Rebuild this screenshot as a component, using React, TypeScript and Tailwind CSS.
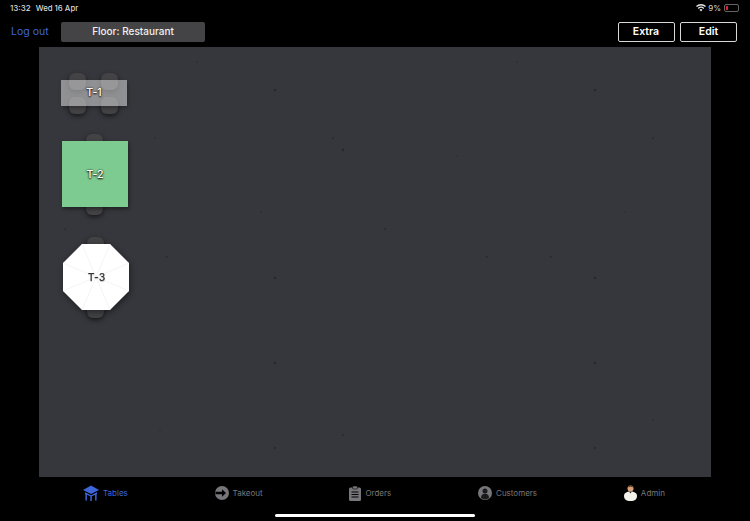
import React from "react";

const font = { fontFamily: '"Inter","Liberation Sans",sans-serif' };

function Chair({ className }: { className: string }) {
  return <div className={`absolute w-[17px] h-[17px] rounded-[6px] bg-[#434346] shadow-[0_2px_5px_rgba(0,0,0,0.6)] ${className}`} />;
}

function TabItem({ icon, label, active }: { icon: React.ReactNode; label: string; active?: boolean }) {
  return (
    <div className="flex items-center gap-[4px] h-[16px]">
      {icon}
      <span className={`text-[8px] leading-none ${active ? "text-[#3f66d8]" : "text-[#77777b]"}`}>{label}</span>
    </div>
  );
}

const specks: [number, number, number][] = [
  [275, 90, 1.3], [595, 90, 1.3], [343, 150, 1.4], [333, 138, 1], [653, 138, 1], [275, 278, 1.3], [595, 278, 1.3],
  [275, 363, 1.3], [595, 363, 1.3], [385, 229, 1], [487, 257, 1], [551, 257, 1], [261, 212, 0.8], [457, 156, 0.7],
  [275, 448, 1.2], [595, 448, 1.2], [65, 229, 0.9], [167, 257, 0.9], [197, 62, 0.8], [517, 62, 0.8],
  [343, 435, 1], [155, 138, 0.8], [653, 420, 0.8], [450, 400, 0.7], [160, 430, 0.8], [625, 212, 0.7],
];

export default function App() {
  return (
    <div className="w-[750px] h-[521px] bg-black flex flex-col overflow-hidden text-white" style={font}>
      {/* status bar */}
      <div className="h-[16px] flex items-center justify-between pl-[10px] pr-[11px] text-[8px] text-[#d8d8d8] shrink-0">
        <div className="flex items-baseline gap-[5px] font-medium leading-none">
          <span className="text-[8px]">13:32</span>
          <span className="text-[7.8px]">Wed 16 Apr</span>
        </div>
        <div className="flex items-center gap-[2px]">
          <svg width="10" height="8" viewBox="0 0 20 16" fill="#e5e5e5">
            <path d="M10 15 7 11.6a4.4 4.4 0 0 1 6 0L10 15Z" />
            <path d="M5.3 9.8 3.5 7.8a9.6 9.600 0 0 1 13 0l-1.8 2a7 7 0 0 0-9.400 0Z" />
            <path d="M1.900 6 0 4a14.600 14.600 0 0 1 20 0l-1.900 2a12 12 0 0 0-16.200 0Z" />
          </svg>
          <span>9%</span>
          <div className="w-[15px] h-[8px] rounded-[2px] border border-[#666] flex items-stretch p-[1px] ml-[1px]">
            <div className="w-[2px] bg-[#e0202a]" />
          </div>
        </div>
      </div>

      {/* header */}
      <div className="h-[31px] flex items-center pl-[11px] pr-[13px] shrink-0">
        <span className="text-[10.5px] text-[#3f66d8] w-[50px]">Log out</span>
        <div className="w-[144px] h-[20px] rounded-[2px] bg-[#444446] flex items-center justify-center text-[10px] font-medium text-[#f0f0f0]">
          Floor: Restaurant
        </div>
        <div className="ml-auto flex gap-[5.5px]">
          <div className="w-[57px] h-[20px] rounded-[2px] border border-[#d8d8d8] flex items-center justify-center text-[10.5px] font-semibold">Extra</div>
          <div className="w-[57px] h-[20px] rounded-[2px] border border-[#d8d8d8] flex items-center justify-center text-[10.5px] font-semibold">Edit</div>
        </div>
      </div>

      {/* canvas */}
      <div className="relative w-[672px] h-[430px] ml-[39px] bg-[#36373c] shrink-0 overflow-hidden">
        <svg className="absolute inset-0" width="672" height="430" viewBox="39 47 672 430">
          {specks.map(([x, y, r]) => (
            <circle key={`${x}-${y}`} cx={x} cy={y} r={r} fill="#2a2a2e" />
          ))}
        </svg>

        {/* T-1 */}
        <Chair className="left-[30px] top-[26px]" />
        <Chair className="left-[62px] top-[26px]" />
        <Chair className="left-[30px] top-[50px]" />
        <Chair className="left-[62px] top-[50px]" />
        <div className="absolute left-[22px] top-[33px] w-[66px] h-[26px] bg-white/45 flex items-center justify-center text-[10.5px] font-medium text-white shadow-[1px_2px_4px_rgba(0,0,0,0.3)] [text-shadow:0_1px_2px_#000,0_0_2px_rgba(0,0,0,0.8)]">
          T-1
        </div>

        {/* T-2 */}
        <Chair className="left-[47px] top-[87px]" />
        <Chair className="left-[47px] top-[151px]" />
        <div className="absolute left-[23px] top-[94px] w-[66px] h-[66px] pt-[1px] bg-[#7ecb91] flex items-center justify-center text-[10.5px] font-medium text-white shadow-[1px_2px_4px_rgba(0,0,0,0.45)] [text-shadow:0_1px_2px_#000,0_0_2px_rgba(0,0,0,0.8)]">
          T-2
        </div>

        {/* T-3 */}
        <Chair className="left-[48px] top-[190px]" />
        <Chair className="left-[48px] top-[254px]" />
        <div className="absolute left-[24px] top-[197px] w-[66px] h-[66px] pt-[1px] pl-[1px] flex items-center justify-center drop-shadow-[1px_2px_3px_rgba(0,0,0,0.45)]">
          <svg className="absolute inset-0" width="66" height="66" viewBox="0 0 66 66">
            <polygon points="19,0 47,0 66,19 66,47 47,66 19,66 0,47 0,19" fill="#ffffff" />
            <g stroke="#efefef" strokeWidth="0.7">
              <line x1="19" y1="0" x2="47" y2="66" />
              <line x1="47" y1="0" x2="19" y2="66" />
              <line x1="0" y1="19" x2="66" y2="47" />
              <line x1="66" y1="19" x2="0" y2="47" />
            </g>
          </svg>
          <span className="relative text-[10.5px] font-medium text-[#333] [text-shadow:0_1px_1px_rgba(0,0,0,0.25)]">T-3</span>
        </div>
      </div>

      {/* tab bar */}
      <div className="flex-1 flex flex-col pt-[8px]">
        <div className="w-[582px] ml-[83px] flex items-center justify-between">
          <TabItem
            active
            label="Tables"
            icon={
              <svg width="16" height="16" viewBox="0 0 16 16" fill="#3f66d8">
                <path d="M8 0.500 16 5 8 9 0 5Z" />
                <path d="M2 7.200 8 10.200 14 7.200V9L8 11.600 2 9Z" />
                <rect x="2.400" y="9" width="1.500" height="6.500" />
                <rect x="12.100" y="9" width="1.500" height="6.500" />
                <rect x="7.300" y="11" width="1.500" height="5" />
              </svg>
            }
          />
          <TabItem
            label="Takeout"
            icon={
              <svg width="14" height="14" viewBox="0 0 14 14">
                <circle cx="7" cy="7" r="7" fill="#77777b" />
                <path d="M0.500 5.700H7V3.200L11 7 7 10.800V8.300H0.500Z" fill="#000" />
              </svg>
            }
          />
          <TabItem
            label="Orders"
            icon={
              <svg width="12" height="15" viewBox="0 0 12 15">
                <rect x="0" y="1.500" width="12" height="13.500" rx="1.500" fill="#77777b" />
                <rect x="3.500" y="0" width="5" height="3" rx="1" fill="#77777b" stroke="#000" strokeWidth="0.6" />
                <path d="M2.500 6h7M2.500 8.500h7M2.500 11h7" stroke="#000" strokeWidth="1" />
              </svg>
            }
          />
          <TabItem
            label="Customers"
            icon={
              <svg width="14" height="14" viewBox="0 0 14 14">
                <circle cx="7" cy="7" r="7" fill="#77777b" />
                <circle cx="7" cy="5" r="2.500" fill="#1a1a1a" />
                <path d="M3 12c0-3 1.500-4.200 4-4.200S11 9 11 12a7 7 0 0 1-8 0Z" fill="#1a1a1a" />
              </svg>
            }
          />
          <TabItem
            label="Admin"
            icon={
              <svg width="13" height="16" viewBox="0 0 13 16">
                <circle cx="6.500" cy="3.500" r="3" fill="#d9a27a" />
                <path d="M3.500 2.500C4 0.500 9 0.500 9.500 2.500L6.500 1.800Z" fill="#5b3a22" />
                <path d="M0 11c0-3 2.500-4.500 6.500-4.500S13 8 13 11c0 3-2 5-6.500 5S0 14 0 11Z" fill="#f4f1ea" />
                <path d="M5.300 6.800 6.500 8.500 7.700 6.800Z" fill="#222" />
              </svg>
            }
          />
        </div>
        <div className="mt-[13px] mx-auto w-[200px] h-[3px] rounded-full bg-white" />
      </div>
    </div>
  );
}
